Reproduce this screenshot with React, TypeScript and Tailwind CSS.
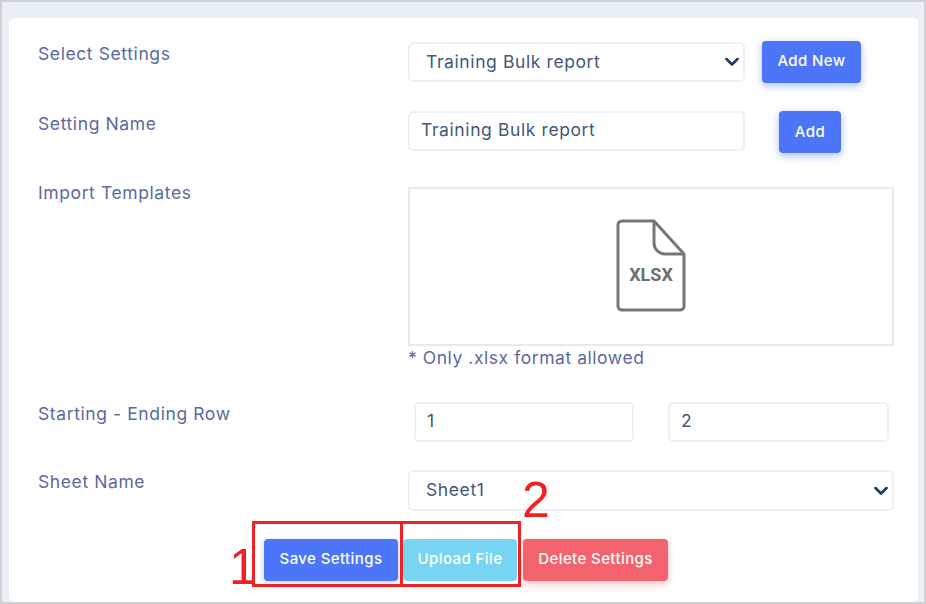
import React from "react";

const font = "font-['Inter','Liberation_Sans',sans-serif]";

function Chevron({ className }: { className?: string }) {
  return (
    <svg className={className} width="14" height="9" viewBox="0 0 14 9" fill="none">
      <path d="M1.5 1.5 L7 7 L12.5 1.5" stroke="#1f3a5f" strokeWidth="2.6" strokeLinecap="round" strokeLinejoin="round" />
    </svg>
  );
}

function SelectBox({ value, className }: { value: string; className: string }) {
  return (
    <div className={`relative ${className}`}>
      <select
        defaultValue={value}
        className={`appearance-none w-full h-full bg-white border-2 border-[#eef0f8] rounded-[5px] pl-4 text-[17.5px] tracking-[0.6px] text-[#44587a] ${font}`}
      >
        <option>{value}</option>
      </select>
      <Chevron className="absolute right-[6px] top-1/2 -translate-y-1/2 pointer-events-none" />
    </div>
  );
}

function TextBox({ value, className }: { value: string; className: string }) {
  return (
    <input
      defaultValue={value}
      className={`bg-white border-2 border-[#eef0f8] rounded-[5px] text-[#44587a] text-[17.5px] tracking-[0.6px] pb-[4px] outline-none ${font} ${className}`}
    />
  );
}

function Label({ children }: { children: React.ReactNode }) {
  return <div className={`w-[370px] shrink-0 text-[17.5px] tracking-[0.6px] leading-[24px] text-[#5a6a9c] ${font}`}>{children}</div>;
}

function Btn({ children, className }: { children: React.ReactNode; className: string }) {
  return (
    <button className={`rounded-[4px] text-white text-[15px] tracking-[0.4px] font-medium flex items-center justify-center ${font} ${className}`}>
      {children}
    </button>
  );
}

export default function App() {
  return (
    <div className="w-[926px] h-[604px] bg-[#e9eff7] border-2 border-[#cfd1d4] pt-[16px] pl-[7px] pr-[6px] overflow-hidden">
      <div className="relative bg-white rounded-[5px] h-[584px] pl-[29px] pt-[23px]">
        {/* Select Settings */}
        <div className="flex h-[42px]">
          <Label><div className="mt-[1px]">Select Settings</div></Label>
          <SelectBox value="Training Bulk report" className="w-[337px] h-[40px] mt-[1px]" />
          <Btn className="w-[99px] h-[42px] ml-[17px] pb-[2px] bg-[#4c75f7] shadow-[0_3px_8px_rgba(76,117,247,0.45)]">Add New</Btn>
        </div>

        {/* Setting Name */}
        <div className="flex h-[42px] mt-[28px]">
          <Label><div className="mt-[1px]">Setting Name</div></Label>
          <TextBox value="Training Bulk report" className="w-[337px] h-[40px] pl-[11px]" />
          <Btn className="w-[62px] h-[42px] ml-[34px] bg-[#4c75f7] shadow-[0_3px_8px_rgba(76,117,247,0.45)]">Add</Btn>
        </div>

        {/* Import Templates */}
        <div className="flex mt-[34px]">
          <Label><div className="-mt-[6px]">Import Templates</div></Label>
          <div className="w-[486px]">
            <div className="h-[159px] border-2 border-[#e8e9ec] flex items-center justify-center">
              <svg width="72" height="100" viewBox="0 0 72 100" fill="none" className="-mt-[2px]">
                <path
                  d="M7 5 H39 L69 38 V90 a4 4 0 0 1 -4 4 H7 a4 4 0 0 1 -4 -4 V9 a4 4 0 0 1 4 -4 Z"
                  stroke="#767676"
                  strokeWidth="3"
                  strokeLinejoin="round"
                />
                <path d="M39 5 V27 a11 11 0 0 0 11 11 H69" stroke="#767676" strokeWidth="3" strokeLinejoin="round" />
                <text x="36" y="65" textAnchor="middle" fontSize="18" fontWeight="700" fill="#6f6f6f" fontFamily="Roboto, sans-serif">XLSX</text>
              </svg>
            </div>
            <div className={`text-[17.5px] tracking-[0.55px] leading-[24px] text-[#5a6a9c] ${font}`}>* Only .xlsx format allowed</div>
          </div>
        </div>

        {/* Starting - Ending Row */}
        <div className="flex h-[40px] mt-[32px]">
          <Label>Starting - Ending Row</Label>
          <TextBox value="1" className="w-[220px] h-[40px] ml-[6px] pl-[11px]" />
          <TextBox value="2" className="w-[221px] h-[40px] ml-[34px] pl-[11px]" />
        </div>

        {/* Sheet Name */}
        <div className="flex h-[41px] mt-[28px]">
          <Label>Sheet Name</Label>
          <SelectBox value="Sheet1" className="w-[486px] h-[41px]" />
        </div>

        {/* Actions */}
        <div className="flex mt-[28px] ml-[226px] gap-[5px]">
          <Btn className="w-[134px] h-[42px] pb-[2px] bg-[#4c75f7] shadow-[0_2px_6px_rgba(76,117,247,0.35)]">Save Settings</Btn>
          <Btn className="w-[114px] h-[42px] pb-[2px] bg-[#78d5f2]">Upload File</Btn>
          <Btn className="w-[145px] h-[42px] pb-[2px] ml-[1px] bg-[#f3636e] shadow-[0_3px_8px_rgba(243,99,110,0.4)]">Delete Settings</Btn>
        </div>

        {/* Annotations over the screenshot */}
        <div className="absolute left-[243px] top-[503px] w-[151px] h-[66px] border-[3px] border-[#ee2222]" />
        <div className="absolute left-[391px] top-[503px] w-[121px] h-[66px] border-[3px] border-[#ee2222]" />
        <div className="absolute left-[220px] top-[521px] text-[50px] leading-[56px] text-[#ee2222] font-['Liberation_Sans',sans-serif]">1</div>
        <div className="absolute left-[513px] top-[454px] text-[50px] leading-[56px] text-[#ee2222] font-['Liberation_Sans',sans-serif]">2</div>
      </div>
    </div>
  );
}
